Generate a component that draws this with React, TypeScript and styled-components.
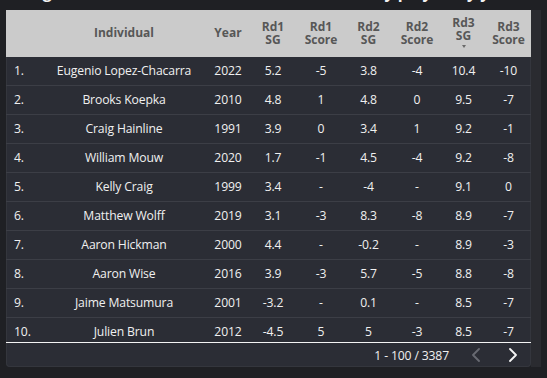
import React from "react";
import styled, { createGlobalStyle } from "styled-components";

const GlobalStyle = createGlobalStyle`
  html, body { margin: 0; padding: 0; background: #1f2024; }
  body { font-family: "Open Sans", "Noto Sans", Arial, sans-serif; }
`;

const Page = styled.div`
  width: 547px;
  height: 378px;
  overflow: hidden;
  padding-left: 6px;
  box-sizing: border-box;
`;

const TitleClip = styled.div`
  height: 10px;
  overflow: hidden;
  width: 535px;
`;

const Title = styled.div`
  margin-top: -18px;
  text-align: center;
  color: #f2f2f2;
  font-size: 16px;
  font-weight: 700;
  line-height: 20px;
  white-space: nowrap;
`;

const Frame = styled.div`
  display: flex;
  align-items: stretch;
`;

const Gutter = styled.div`
  width: 10px;
  background: #2a2b30;
`;

const Table = styled.div`
  width: 525px;
  background: #2b2d35;
  border-radius: 0 0 4px 4px;
  overflow: hidden;
  box-shadow: 0 0 0 1px #34363d inset;
`;

const COLS = "34px 168px 40px 50px 46px 49px 48px 45px 45px";

const HeaderRow = styled.div`
  display: grid;
  grid-template-columns: ${COLS};
  height: 47px;
  background: #cbcbcb;
  align-items: center;
`;

const HeadCell = styled.div<{ $up?: boolean }>`
  text-align: center;
  color: #575757;
  font-size: 12px;
  font-weight: 700;
  line-height: 12.5px;
  white-space: nowrap;
  margin-top: ${(p) => (p.$up ? "-2px" : "0")};
`;

const HeadLine = styled.div``;

const SortCaret = styled.div`
  width: 0;
  height: 0;
  margin: 3px auto 0;
  border-left: 2.5px solid transparent;
  border-right: 2.5px solid transparent;
  border-top: 3px solid #6a6a6a;
`;

const Body = styled.div`
  height: 285px;
  overflow: hidden;
`;

const Row = styled.div`
  display: grid;
  grid-template-columns: ${COLS};
  height: 29px;
  box-sizing: border-box;
  border-bottom: 1px solid #3c3e46;
  align-items: center;
`;

const Cell = styled.div<{ $left?: boolean }>`
  text-align: ${(p) => (p.$left ? "left" : "center")};
  padding-left: ${(p) => (p.$left ? "8px" : "0")};
  color: #f0f0f0;
  font-size: 12.2px;
  letter-spacing: -0.15px;
  white-space: nowrap;
  line-height: 28px;
`;

const Footer = styled.div`
  height: 24px;
  border-top: 1px solid #f4f4f4;
  display: flex;
  align-items: center;
  justify-content: flex-end;
  padding-right: 13px;
  color: #f0f0f0;
  font-size: 12.2px;
  letter-spacing: -0.15px;
`;

const PageInfo = styled.span`
  margin-right: 22px;
`;

const NavButton = styled.button<{ $enabled?: boolean }>`
  background: none;
  border: none;
  padding: 0;
  margin-left: ${(p) => (p.$enabled ? "27px" : "0")};
  display: flex;
  align-items: center;
  color: ${(p) => (p.$enabled ? "#f4f4f4" : "#686a72")};
  cursor: pointer;
`;

const Chevron = ({ dir }: { dir: "left" | "right" }) => (
  <svg width="10" height="14" viewBox="0 0 10 14" fill="none">
    <path
      d={dir === "left" ? "M8 1 L2 7 L8 13" : "M2 1 L8 7 L2 13"}
      stroke="currentColor"
      strokeWidth="1.8"
      strokeLinecap="round"
      strokeLinejoin="round"
    />
  </svg>
);

type R = [string, string, string, string, string, string, string, string];

const rows: R[] = [
  ["Eugenio Lopez-Chacarra", "2022", "5.2", "-5", "3.8", "-4", "10.4", "-10"],
  ["Brooks Koepka", "2010", "4.8", "1", "4.8", "0", "9.5", "-7"],
  ["Craig Hainline", "1991", "3.9", "0", "3.4", "1", "9.2", "-1"],
  ["William Mouw", "2020", "1.7", "-1", "4.5", "-4", "9.2", "-8"],
  ["Kelly Craig", "1999", "3.4", "-", "-4", "-", "9.1", "0"],
  ["Matthew Wolff", "2019", "3.1", "-3", "8.3", "-8", "8.9", "-7"],
  ["Aaron Hickman", "2000", "4.4", "-", "-0.2", "-", "8.9", "-3"],
  ["Aaron Wise", "2016", "3.9", "-3", "5.7", "-5", "8.8", "-8"],
  ["Jaime Matsumura", "2001", "-3.2", "-", "0.1", "-", "8.5", "-7"],
  ["Julien Brun", "2012", "-4.5", "5", "5", "-3", "8.5", "-7"],
];

const headers: { lines: string[]; sort?: boolean }[] = [
  { lines: [""] },
  { lines: ["Individual"] },
  { lines: ["Year"] },
  { lines: ["Rd1", "SG"] },
  { lines: ["Rd1", "Score"] },
  { lines: ["Rd2", "SG"] },
  { lines: ["Rd2", "Score"] },
  { lines: ["Rd3", "SG"], sort: true },
  { lines: ["Rd3", "Score"] },
];

export default function App() {
  return (
    <>
      <GlobalStyle />
      <Page>
        <TitleClip>
          <Title>Highest Individual Round 3 Strokes Gained (by player, by year)</Title>
        </TitleClip>
        <Frame>
          <Table>
            <HeaderRow>
              {headers.map((h, i) => (
                <HeadCell key={i} $up={h.sort}>
                  {h.lines.map((l, j) => (
                    <HeadLine key={j}>{l}</HeadLine>
                  ))}
                  {h.sort && <SortCaret />}
                </HeadCell>
              ))}
            </HeaderRow>
            <Body>
              {rows.map((r, i) => (
                <Row key={i}>
                  <Cell $left>{i + 1}.</Cell>
                  {r.map((v, j) => (
                    <Cell key={j}>{v}</Cell>
                  ))}
                </Row>
              ))}
            </Body>
            <Footer>
              <PageInfo>1 - 100 / 3387</PageInfo>
              <NavButton aria-label="Previous page">
                <Chevron dir="left" />
              </NavButton>
              <NavButton $enabled aria-label="Next page">
                <Chevron dir="right" />
              </NavButton>
            </Footer>
          </Table>
          <Gutter />
        </Frame>
      </Page>
    </>
  );
}
